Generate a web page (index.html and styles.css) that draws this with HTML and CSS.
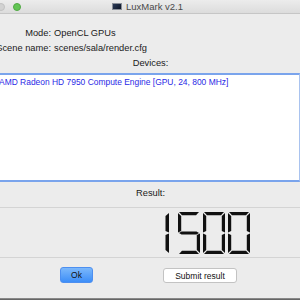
FILE: index.html
```html
<!DOCTYPE html>
<html>
<head>
<meta charset="utf-8">
<link rel="stylesheet" href="styles.css">
</head>
<body>
<div class="window">
  <div class="titlebar">
    <div class="lights">
      <span class="light gray"></span>
      <span class="light green"></span>
    </div>
    <div class="title">
      <span class="appicon"></span>
      <span class="title-text">LuxMark v2.1</span>
    </div>
    <div></div>
  </div>
  <div class="form">
    <span class="label"><span>Mode:</span></span><span class="value">OpenCL GPUs</span>
    <span class="label"><span>Scene name:</span></span><span class="value">scenes/sala/render.cfg</span>
  </div>
  <div class="caption devices">Devices:</div>
  <div class="listbox">
    <div class="device">AMD Radeon HD 7950 Compute Engine [GPU, 24, 800 MHz]</div>
  </div>
  <div class="caption result">Result:</div>
  <div class="lcd-area">
    <svg class="lcd" width="100" height="44" viewBox="0 0 100 44" aria-label="1500">
      <g fill="#111">
        <g transform="translate(-3,1)">
          <polygon points="22,1 22,20.5 18.5,19 18.5,4"/>
          <polygon points="22,21.5 22,41 18.5,38 18.5,23"/>
        </g>
        <g transform="translate(28,1)">
          <polygon points="1,0 21,0 18,3.2 4,3.2"/>
          <polygon points="0,1 0,20.5 3.2,19 3.2,4"/>
          <polygon points="1,21 3.5,19.5 18.5,19.5 21,21 18.5,22.5 3.5,22.5"/>
          <polygon points="22,21.5 22,41 18.8,38 18.8,23"/>
          <polygon points="1,42 21,42 18,38.8 4,38.8"/>
        </g>
        <g transform="translate(53,1)">
          <polygon points="1,0 21,0 18,3.2 4,3.2"/>
          <polygon points="0,1 0,20.5 3.2,19 3.2,4"/>
          <polygon points="22,1 22,20.5 18.8,19 18.8,4"/>
          <polygon points="0,21.5 0,41 3.2,38 3.2,23"/>
          <polygon points="22,21.5 22,41 18.8,38 18.8,23"/>
          <polygon points="1,42 21,42 18,38.8 4,38.8"/>
        </g>
        <g transform="translate(78,1)">
          <polygon points="1,0 21,0 18,3.2 4,3.2"/>
          <polygon points="0,1 0,20.5 3.2,19 3.2,4"/>
          <polygon points="22,1 22,20.5 18.8,19 18.8,4"/>
          <polygon points="0,21.5 0,41 3.2,38 3.2,23"/>
          <polygon points="22,21.5 22,41 18.8,38 18.8,23"/>
          <polygon points="1,42 21,42 18,38.8 4,38.8"/>
        </g>
      </g>
    </svg>
  </div>
  <div class="buttons">
    <button class="btn btn-default">Ok</button>
    <button class="btn btn-plain">Submit result</button>
  </div>
  <div class="desktop-edge"></div>
</div>
</body>
</html>
```
FILE: styles.css
```css
html, body {
  margin: 0;
  padding: 0;
}
body {
  width: 300px;
  height: 300px;
  overflow: hidden;
  background: #ececec;
  font-family: "Liberation Sans", Arial, sans-serif;
  color: #1a1a1a;
}
.window {
  display: flex;
  flex-direction: column;
  height: 300px;
}
.titlebar {
  height: 13px;
  flex: none;
  display: grid;
  grid-template-columns: 1fr auto 1fr;
  align-items: center;
  background: linear-gradient(#ececec, #dcdcdc);
  border-bottom: 1px solid #c6c6c6;
}
.lights {
  display: flex;
  gap: 8px;
  margin-left: -3px;
}
.light {
  width: 8px;
  height: 8px;
  border-radius: 50%;
  box-sizing: border-box;
}
.light.gray {
  background: #d2d2d2;
  border: 1px solid #c2c2c2;
}
.light.green {
  background: #62c554;
  border: 1px solid #50a843;
}
.title {
  display: flex;
  align-items: center;
  gap: 4px;
  margin-left: -5px;
}
.appicon {
  width: 10px;
  height: 7px;
  background: linear-gradient(135deg, #2a3a58, #0d1526);
  border: 1px solid #8a8f98;
  box-sizing: border-box;
}
.title-text {
  font-size: 9.5px;
  color: #4a4a4a;
  line-height: 13px;
}
.form {
  display: grid;
  grid-template-columns: 51px auto;
  column-gap: 3px;
  margin-top: 12px;
  font-size: 9.3px;
  line-height: 15px;
}
.label {
  display: flex;
  justify-content: flex-end;
  white-space: nowrap;
  overflow: hidden;
}
.label > span {
  flex: none;
}
.value {
  white-space: nowrap;
}
.caption {
  text-align: center;
  font-size: 9.3px;
  line-height: 15px;
}
.devices {
  padding-left: 1px;
}
.listbox {
  margin-top: 2px;
  height: 105px;
  background: #fff;
  border-top: 2px solid #7aa4ec;
  border-bottom: 2px solid #7aa4ec;
  border-right: 1px solid #a9c3ef;
  flex: none;
}
.device {
  font-size: 8.45px;
  line-height: 12px;
  color: #2a2ae6;
  white-space: nowrap;
  margin-left: -1px;
  padding-top: 1px;
}
.result {
  margin-top: 4px;
  padding-left: 1px;
}
.lcd-area {
  margin-top: 6px;
  border-top: 1px solid #d4d4d4;
  border-bottom: 1px solid #d4d4d4;
  height: 49px;
  display: flex;
  align-items: center;
  padding-left: 150px;
  flex: none;
}
.lcd {
  display: block;
}
.buttons {
  flex: 1;
  display: flex;
  align-items: flex-start;
  padding-top: 9px;
}
.btn {
  font-family: "Liberation Sans", Arial, sans-serif;
  font-size: 8.5px;
  height: 16px;
  padding: 0;
  box-sizing: border-box;
  color: #111;
  line-height: 14px;
}
.btn-default {
  margin-left: 60px;
  width: 33px;
  border: 1px solid #4d8ff0;
  border-radius: 3px;
  background: linear-gradient(#7cb8fb, #3d8ef8);
}
.btn-plain {
  margin-left: 70px;
  margin-top: 1px;
  width: 74px;
  height: 15px;
  border: 1px solid #c3c3c3;
  border-radius: 3px;
  background: #fff;
}
.desktop-edge {
  height: 2px;
  flex: none;
  background: linear-gradient(#9a9a9a, #555);
}
```
